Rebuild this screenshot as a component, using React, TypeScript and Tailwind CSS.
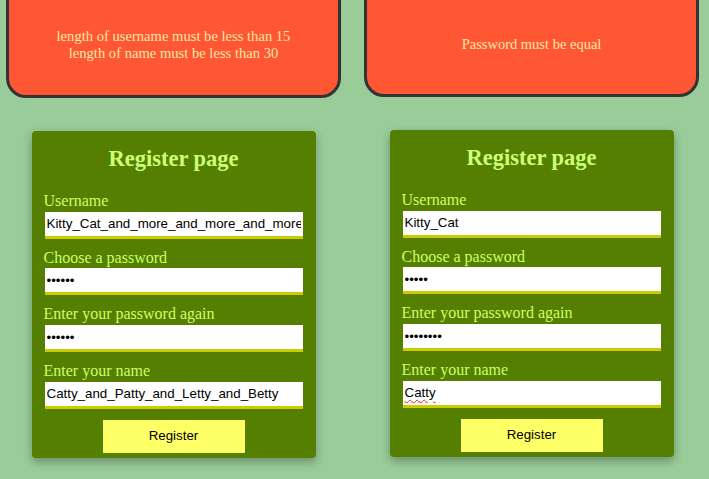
import React from "react";

const serif = { fontFamily: '"Liberation Serif", "Times New Roman", serif' };
const sans = { fontFamily: '"Liberation Sans", Arial, sans-serif' };

function Field({ label, value, type = "text", wavy = false }: { label: string; value: string; type?: string; wavy?: boolean }) {
  return (
    <div className="mt-[10px] flex flex-col">
      <label className="block text-[16px] leading-[18.67px] text-[#ccff66]" style={serif}>
        {label}
      </label>
      {wavy ? (
        <div
          className="mx-px mt-px flex h-[27px] w-[258px] items-center border-b-[3px] border-[#cccc00] bg-white px-[2px] text-[13.33px] text-black"
          style={sans}
        >
          <span className="underline decoration-wavy decoration-[#e02020] decoration-[1px] underline-offset-[2px]">{value}</span>
        </div>
      ) : (
        <input
          readOnly
          type={type}
          defaultValue={value}
          spellCheck={false}
          className="mx-px mt-px h-[27px] w-[258px] border-0 border-b-[3px] border-[#cccc00] bg-white px-[2px] text-[13.33px] text-black outline-none"
          style={sans}
        />
      )}
    </div>
  );
}

function Card({ fields }: { fields: { label: string; value: string; type?: string; wavy?: boolean }[] }) {
  return (
    <div className="mt-[33px] flex w-[284px] flex-col rounded-[4px] bg-[#557f00] px-[12px] pb-[5px] pt-[15px] shadow-[0_4px_10px_rgba(0,0,0,0.3)]">
      <h2 className="text-center text-[22.5px] font-bold leading-[25px] text-[#ccff77]" style={serif}>
        Register page
      </h2>
      <div className="mt-[11px]">
        {fields.map((f) => (
          <Field key={f.label} {...f} />
        ))}
      </div>
      <div className="mt-[11px] flex justify-center">
        <button className="h-[33px] w-[142px] bg-[#ffff66] text-[13.33px] text-black" style={sans}>
          Register
        </button>
      </div>
    </div>
  );
}

export default function App() {
  return (
    <div className="min-h-screen w-full overflow-hidden bg-[#99cc99]">
      <div className="flex gap-[23px] pl-[6px]">
        <div className="flex w-[335px] flex-col items-center">
          <div
            className="-mt-[9px] flex h-[107px] w-[335px] flex-col items-center justify-center rounded-b-[20px] border-[3px] border-[#333333] bg-[#ff5733] text-center text-[14.6px] leading-[17px] text-[#ffe6a8]"
            style={serif}
          >
            <div>length of username must be less than 15</div>
            <div>length of name must be less than 30</div>
          </div>
          <Card
            fields={[
              { label: "Username", value: "Kitty_Cat_and_more_and_more_and_more" },
              { label: "Choose a password", value: "123456", type: "password" },
              { label: "Enter your password again", value: "123456", type: "password" },
              { label: "Enter your name", value: "Catty_and_Patty_and_Letty_and_Betty" },
            ]}
          />
        </div>
        <div className="flex w-[335px] flex-col items-center">
          <div
            className="-mt-[9px] flex h-[106px] w-[335px] flex-col items-center justify-center rounded-b-[20px] border-[3px] border-[#333333] bg-[#ff5733] text-center text-[14.5px] leading-[17px] text-[#ffe6a8]"
            style={serif}
          >
            <div>Password must be equal</div>
          </div>
          <Card
            fields={[
              { label: "Username", value: "Kitty_Cat" },
              { label: "Choose a password", value: "12345", type: "password" },
              { label: "Enter your password again", value: "12345678", type: "password" },
              { label: "Enter your name", value: "Catty", wavy: true },
            ]}
          />
        </div>
      </div>
    </div>
  );
}
